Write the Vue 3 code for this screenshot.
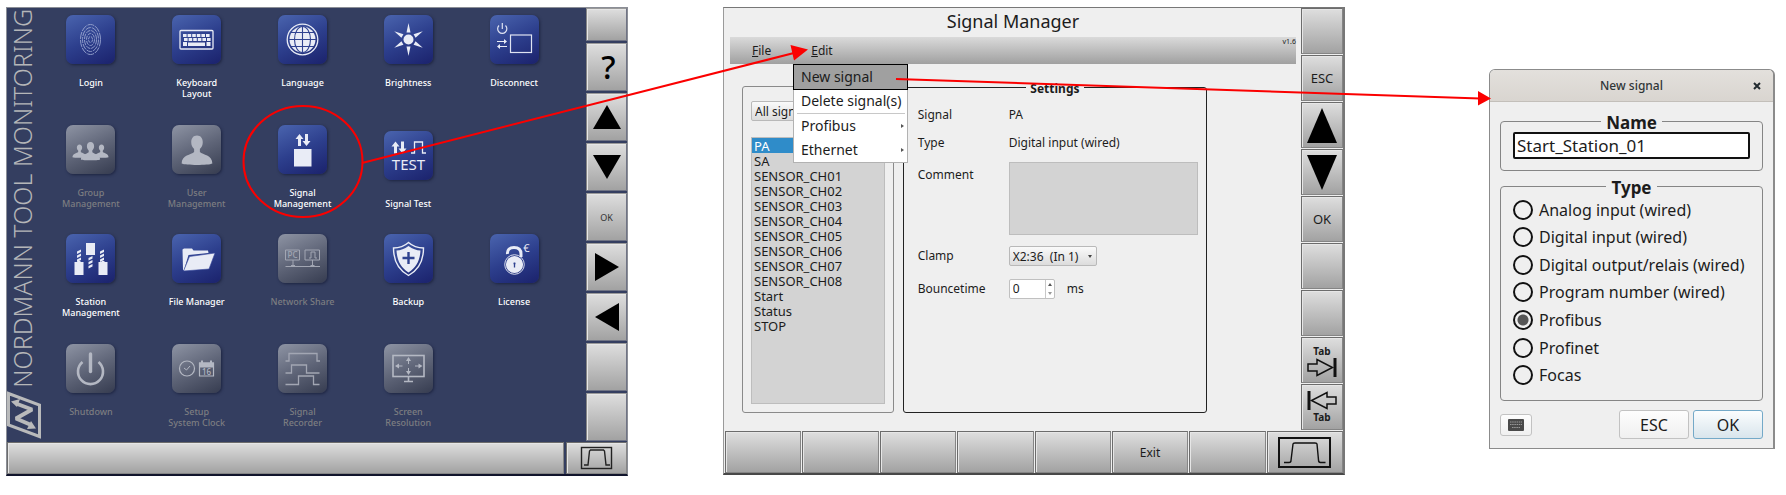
<script setup>
import { ref } from 'vue'

const pair = (x, y) =>
  `<path d="M${x} ${y + 12}h3v-7h2.500l-4-5-4 5h2.500zM${x + 7} ${y}h3v7h2.500l-4 5-4-5h2.500z" fill="#e9ecf6"/>`

const drill = (x, y) =>
  `<path d="M${x - 2} ${y + 2}l4-2v2.500l-4 2zM${x - 2} ${y + 6}l4-2v2.500l-4 2zM${x - 2} ${y + 10}l4-2v2.500l-4 2z" fill="#e9ecf6"/>`

const rays = [0, 60, 120, 180, 240, 300]
  .map((a) => `<path d="M22.500 17.500L24.500 8l2 9.500z" transform="rotate(${a} 24.500 24.500)" fill="#e9ecf6"/>`)
  .join('')

const keyDots = [
  [11, 19, 6], [12, 23, 6]
].map(([x, y, n]) => Array.from({ length: n }, (_, i) => `<rect x="${x + i * 4.6}" y="${y}" width="3.600" height="3" fill="#e9ecf6"/>`).join('')).join('')

const ridges = [2, 4, 6, 8, 10]
  .map((r, i) => `<ellipse cx="24.500" cy="24.500" rx="${r}" ry="${r * 1.5}" stroke-dasharray="${3 + i} 1" stroke="#8f9cca" stroke-width="1"/>`)
  .join('')

const bust = (x, y, s) =>
  `<path transform="translate(${x} ${y}) scale(${s})" d="M0-15c4 0 6 3 6 7 0 3-1 5-3 7v3c3 3 13 3 13 12-4 2-28 2-32 0 0-9 10-9 13-12v-3c-2-2-3-4-3-7 0-4 2-7 6-7z" fill="#b4b8c3"/>`

const icons = {
  login: ridges,
  keyboard: `<rect x="8" y="15.500" width="33" height="18.500" rx="1" stroke="#e9ecf6" stroke-width="1.300"/>${keyDots}<path d="M11 27h4v4h-4zM16 27.500h17v3.500H16zM34.500 27h4v4h-4z" fill="#e9ecf6"/>`,
  globe: `<g stroke="#e9ecf6" stroke-width="1.300"><circle cx="24.500" cy="24.500" r="15.300"/></g><circle cx="24.500" cy="24.500" r="13" fill="#e9ecf6"/><g stroke="#2f4290" stroke-width="1.100"><ellipse cx="24.500" cy="24.500" rx="8" ry="13"/><path d="M24.500 11v27M11 24.500h27M13 17.500h23M13 31.500h23"/></g>`,
  sun: `<circle cx="24.500" cy="24.500" r="5" fill="#e9ecf6"/>${rays}`,
  disconnect: `<g stroke="#dfe3f2" stroke-width="1.200"><path d="M9 10.500a4.600 4.600 0 1 0 6.500 0M12.300 8v6"/><rect x="20.500" y="20" width="21" height="17.500"/></g><path d="M7 26h7v-2l3 2.500-3 2.500v-2H7zM17 31h-7v-2l-3 2.500 3 2.500v-2h7z" fill="#e9ecf6"/>`,
  group: bust(13.5, 26, 0.44) + bust(35.5, 26, 0.44) + bust(24.5, 26, 0.6),
  user: bust(25, 25, 0.96),
  signal: `${pair(20, 9)}<rect x="16" y="24" width="17.500" height="17.500" fill="#e9ecf6"/>`,
  test: `${pair(10, 10.5)}<path d="M27 22h3.500V11h8v11H42" stroke="#e9ecf6" stroke-width="1.300"/><text x="24.500" y="39" font-size="15" font-weight="400" text-anchor="middle" fill="#e9ecf6">TEST</text>`,
  station: `<path d="M20 9h9v12h-9zM8.500 28h3v-1h3v1h3v13h-9zM32.500 28h3v-1h3v1h3v13h-9z" fill="#e9ecf6"/>${drill(13, 15.5)}${drill(24.5, 22)}${drill(36, 15.5)}`,
  folder: `<path d="M11 36l-.5-20.500 1.500-1h8l1.500 2H36l.500 2.500-20 2-4.500 15z" fill="#e9ecf6"/><path d="M17.500 22.500L43 19l-6 16-25.500 2z" fill="#e9ecf6" stroke="#35479a" stroke-width=".6"/>`,
  network: `<g stroke="#a2a6b3" stroke-width="1"><path d="M7.500 16h14v10h-14zM27 16h14.500v10H27zM15 26v6M34.500 26v6M7.500 32.500H42M31 24h2v-6h4v6h2"/></g><path d="M13 31h4v2h-4zM32.500 31h4v2h-4z" fill="#a2a6b3"/><text x="14.500" y="24" font-size="8" text-anchor="middle" fill="#a2a6b3">PC</text>`,
  shield: `<path d="M24.500 8.500c4.500 4 9.500 5.500 15 5.500 0 12-4 21.500-15 27.500-11-6-15-15.500-15-27.500 5.500 0 10.500-1.500 15-5.500z" stroke="#e9ecf6" stroke-width="1.400"/><path d="M24.500 12c4 3 8 4.300 12 4.500-.5 9.500-4 17-12 22-8-5-11.500-12.500-12-22 4-.2 8-1.500 12-4.500z" fill="#e9ecf6"/><path d="M24.500 18v12M18.500 24h12" stroke="#2f4290" stroke-width="2.400"/>`,
  lock: `<path d="M17.500 20c-.5-4 2-6.500 6.500-6.500s7 2.500 7 6.500v3" stroke="#e9ecf6" stroke-width="3"/><circle cx="24.500" cy="30.500" r="9.800" stroke="#e9ecf6" stroke-width=".9"/><circle cx="24.500" cy="30.500" r="8.600" fill="#e9ecf6"/><path d="M24.500 28.500v5M23.500 29.500h2" stroke="#2f4290" stroke-width="1.300"/><text x="36.500" y="18" font-size="11" font-weight="400" text-anchor="middle" fill="#e9ecf6">€</text>`,
  power: `<path d="M16.500 17a12.500 12.500 0 1 0 16 0" stroke="#b4b8c3" stroke-width="2.600" transform="translate(0 1)"/><path d="M24.500 10v17.500" stroke="#b4b8c3" stroke-width="3.400" stroke-linecap="round"/>`,
  clock: `<circle cx="15" cy="24.500" r="7.500" stroke="#b4b8c3" stroke-width="1.200"/><path d="M12 24l2.500 2 3.500-4" stroke="#b4b8c3"/><path d="M27.500 19h14v13h-14z" stroke="#b4b8c3" stroke-width="1.200"/><path d="M27 18.500h15v5H27zM29 16.500h2v3h-2zM38 16.500h2v3h-2z" fill="#b4b8c3"/><text x="34.500" y="31" font-size="8" text-anchor="middle" fill="#b4b8c3">16</text>`,
  recorder: `<path d="M7.500 17h3.500V9.500h28V17h3M7.500 29h6v-8h15v8h13M7.500 40.500h13V32h15v8.500h6" stroke="#a2a6b3" stroke-width="1.300"/>`,
  screen: `<rect x="9" y="11.500" width="31" height="21" stroke="#b4b8c3" stroke-width="1.600"/><path d="M24.500 33v4M20 37.500h9" stroke="#b4b8c3" stroke-width="1.600"/><path d="M24.500 13l2.500 4h-2v3h-1v-3h-2zM24.500 31l2.500-4h-2v-3h-1v3h-2zM11 22l4-2.500v2h3.500v1H15v2zM38.500 22l-4-2.500v2H31v1h3.500v2z" fill="#b4b8c3"/>`
}

const apps = [
  { name: ['Login'], icon: 'login' },
  { name: ['Keyboard', 'Layout'], icon: 'keyboard' },
  { name: ['Language'], icon: 'globe' },
  { name: ['Brightness'], icon: 'sun' },
  { name: ['Disconnect'], icon: 'disconnect' },
  { name: ['Group', 'Management'], icon: 'group', off: true },
  { name: ['User', 'Management'], icon: 'user', off: true },
  { name: ['Signal', 'Management'], icon: 'signal' },
  { name: ['Signal Test'], icon: 'test', low: true },
  null,
  { name: ['Station', 'Management'], icon: 'station' },
  { name: ['File Manager'], icon: 'folder' },
  { name: ['Network Share'], icon: 'network', off: true },
  { name: ['Backup'], icon: 'shield' },
  { name: ['License'], icon: 'lock' },
  { name: ['Shutdown'], icon: 'power', off: true },
  { name: ['Setup', 'System Clock'], icon: 'clock', off: true },
  { name: ['Signal', 'Recorder'], icon: 'recorder', off: true },
  { name: ['Screen', 'Resolution'], icon: 'screen', off: true }
]

const homeKeys = [
  { id: 'Blank 1' },
  { id: 'Help', text: '?' },
  { id: 'Up', shape: '15,2 29,26 1,26' },
  { id: 'Down', shape: '1,2 29,2 15,26' },
  { id: 'OK', text: 'OK' },
  { id: 'Right', shape: '3,0 27,14 3,28' },
  { id: 'Left', shape: '27,0 27,28 3,14' },
  { id: 'Blank 2' },
  { id: 'Blank 3' }
]

const managerKeys = [
  { id: 'Blank 1' },
  { id: 'Escape', text: 'ESC' },
  { id: 'Up', shape: '15,0 30,35 0,35' },
  { id: 'Down', shape: '0,0 30,0 15,35' },
  { id: 'Confirm', text: 'OK' },
  { id: 'Blank 2' },
  { id: 'Blank 3' },
  { id: 'Next field', tab: 'next' },
  { id: 'Previous field', tab: 'prev' }
]

const bottomKeys = ['', '', '', '', '', 'Exit', '']
const signals = ['PA', 'SA', 'SENSOR_CH01', 'SENSOR_CH02', 'SENSOR_CH03', 'SENSOR_CH04', 'SENSOR_CH05', 'SENSOR_CH06', 'SENSOR_CH07', 'SENSOR_CH08', 'Start', 'Status', 'STOP']
const types = ['Analog input (wired)', 'Digital input (wired)', 'Digital output/relais (wired)', 'Program number (wired)', 'Profibus', 'Profinet', 'Focas']

const selected = ref('PA')
const type = ref('Profibus')
const signalName = ref('Start_Station_01')
const bounce = ref('0')
const comment = ref('')
</script>

<template>
  <main class="page">
    <section class="home">
      <div class="home-body">
        <div class="rail">
          <span class="brand">NORDMANN TOOL MONITORING</span>
          <svg class="logo" viewBox="0 0 34 48" fill="none">
            <path d="M1.500 2.500L32.500 14v31.500L1.500 34z" stroke="#b9babb" stroke-width="3" />
            <path d="M9 12.500L25 18.500L9 27.500L23 33.500" stroke="#b9babb" stroke-width="4" stroke-linejoin="bevel" />
            <path d="M4 10.500L13 8l-3 8zM29 37.500l-9 .5 4-8z" fill="#b9babb" />
          </svg>
        </div>
        <div class="apps">
          <div v-for="(app, i) in apps" :key="i" class="cell">
            <button v-if="app" class="app" :class="{ off: app.off, low: app.low }">
              <span class="tile"><svg viewBox="0 0 49 49" fill="none" v-html="icons[app.icon]"></svg></span>
              <span class="app-name"><span v-for="line in app.name" :key="line">{{ line }}</span></span>
            </button>
          </div>
        </div>
        <div class="home-keys">
          <button v-for="k in homeKeys" :key="k.id" class="key" :class="{ help: k.text === '?' }" :aria-label="k.id">
            <svg v-if="k.shape" width="30" height="28" viewBox="0 0 30 28"><polygon :points="k.shape" /></svg>
            <template v-else>{{ k.text }}</template>
          </button>
        </div>
      </div>
      <div class="home-bar">
        <button class="key" aria-label="Status bar"></button>
        <button class="key" aria-label="Curve">
          <svg width="34" height="24" viewBox="0 0 34 24" fill="none" stroke="#222">
            <rect x="1.500" y="1.500" width="30" height="21" stroke-width="1.400" />
            <path d="M4 19h4l1.500-14 1-1h13l1 1L26 19h4" stroke-width="1.400" />
          </svg>
        </button>
      </div>
    </section>

    <section class="manager">
      <div class="manager-body">
        <div class="work">
          <h1>Signal Manager</h1>
          <nav class="menubar">
            <button><u>F</u>ile</button>
            <button><u>E</u>dit</button>
            <small>v1.6</small>
            <div class="popup">
              <button class="active">New signal</button>
              <button>Delete signal(s)</button>
              <hr />
              <button>Profibus<i></i></button>
              <button>Ethernet<i></i></button>
            </div>
          </nav>
          <div class="panes">
            <div class="list-pane">
              <div class="combo wide">
                <select aria-label="Signal filter"><option>All signals</option></select>
              </div>
              <ul>
                <li v-for="s in signals" :key="s">
                  <button :class="{ chosen: s === selected }" @click="selected = s">{{ s }}</button>
                </li>
              </ul>
            </div>
            <fieldset class="settings">
              <legend>Settings</legend>
              <div class="form">
                <span>Signal</span><span>PA</span>
                <span>Type</span><span>Digital input (wired)</span>
                <label for="comment" class="top">Comment</label>
                <textarea id="comment" v-model="comment"></textarea>
                <label for="clamp">Clamp</label>
                <div class="combo">
                  <select id="clamp"><option>X2:36&nbsp; (In 1)</option></select>
                </div>
                <label for="bounce">Bouncetime</label>
                <div class="unit">
                  <div class="spin">
                    <input id="bounce" v-model="bounce" type="text" inputmode="numeric" />
                    <div class="steps">
                      <button aria-label="Increase"></button>
                      <button aria-label="Decrease"></button>
                    </div>
                  </div>
                  <span>ms</span>
                </div>
              </div>
            </fieldset>
          </div>
        </div>
        <div class="manager-keys">
          <button v-for="k in managerKeys" :key="k.id" class="key" :aria-label="k.id">
            <svg v-if="k.shape" width="30" height="35" viewBox="0 0 30 35"><polygon :points="k.shape" /></svg>
            <template v-else-if="k.tab">
              <b v-if="k.tab === 'next'">Tab</b>
              <svg width="30" height="19" viewBox="0 0 30 19" fill="none" stroke="#111" stroke-width="1.500">
                <g :transform="k.tab === 'prev' ? 'matrix(-1 0 0 1 30 0)' : undefined">
                  <path d="M1 6h9V1.500l15.500 8L10 17.500V13H1z" />
                  <path d="M28 0v19" stroke-width="3" />
                </g>
              </svg>
              <b v-if="k.tab === 'prev'">Tab</b>
            </template>
            <template v-else>{{ k.text }}</template>
          </button>
        </div>
      </div>
      <div class="manager-bar">
        <button v-for="(k, i) in bottomKeys" :key="i" class="key" :aria-label="k || 'Blank'">{{ k }}</button>
        <button class="key" aria-label="Curve">
          <svg width="53" height="31" viewBox="0 0 53 31" fill="none" stroke="#111">
            <rect x="1" y="1" width="51" height="29" stroke-width="2" />
            <path d="M6 25.500h5q2 0 2-2L15 7q0-1 2-1h20q2 0 2 1l1.500 16q0 2.500 2 2.500h5" stroke-width="1.400" />
          </svg>
        </button>
      </div>
    </section>

    <section class="dialog">
      <header>
        <h2>New signal</h2>
        <button aria-label="Close">
          <svg width="8" height="8" viewBox="0 0 8 8" stroke="#222b30" stroke-width="2"><path d="M1 1l6 6M7 1L1 7" /></svg>
        </button>
      </header>
      <div class="dialog-body">
        <fieldset class="name-box">
          <legend>Name</legend>
          <input v-model="signalName" type="text" aria-label="Name" />
        </fieldset>
        <fieldset class="type-box">
          <legend>Type</legend>
          <div class="choices">
            <label v-for="t in types" :key="t"><input v-model="type" type="radio" name="type" :value="t" />{{ t }}</label>
          </div>
        </fieldset>
        <footer>
          <button class="kbd" aria-label="On-screen keyboard">
            <svg width="16" height="12" viewBox="0 0 16 12">
              <rect width="16" height="12" rx="1" fill="#4a4a4a" />
              <path d="M2 3h12M2 5.500h12M4 8.500h8" stroke="#9a9a9a" stroke-dasharray="1.500 .7" />
            </svg>
          </button>
          <button>ESC</button>
          <button class="default">OK</button>
        </footer>
      </div>
    </section>

    <svg class="callouts" viewBox="0 0 1786 495" preserveAspectRatio="none" fill="none" stroke="#fb0000" stroke-width="2">
      <ellipse cx="303" cy="161.500" rx="59.500" ry="55.500" />
      <path d="M362 163L794 53M896 79L1480 98.500" />
      <path d="M808 49.500L790.500 45l3.500 15.500zM1491 98.500L1478 91v14.500z" fill="#fb0000" stroke="none" />
    </svg>
  </main>
</template>

<style>
body { margin: 0; background: #fff; }
</style>

<style scoped>
.page {
  position: relative;
  display: grid;
  grid-template-columns: 622fr 95fr 622fr 144fr 286fr;
  align-items: start;
  padding: 7px 11px 20px 6px;
  font-family: "Noto Sans", "Open Sans", sans-serif;
  font-size: 12px;
  color: #1c1c1c;
}
.page *, .page { box-sizing: border-box; }
button, input, select, textarea { font: inherit; color: inherit; margin: 0; }
button { padding: 0; border: 0; background: none; }
h1, h2, ul, fieldset { margin: 0; padding: 0; font-weight: 400; }
.home { grid-column: 1; }
.manager { grid-column: 3; }
.dialog { grid-column: 5; }
.callouts { position: absolute; z-index: 2; left: 0; top: 0; width: 100%; height: 495px; pointer-events: none; }

.key {
  display: flex;
  flex-direction: column;
  align-items: center;
  justify-content: center;
  min-width: 0;
  border: 1px solid #858585;
  border-top-color: #6c6c6c;
  border-left-color: #6c6c6c;
  background: linear-gradient(#dedede, #a2a2a2);
  box-shadow: inset 1px 1px 0 #e6e6e6;
}

.home { background: #343e60; border: 1px solid #8b8e96; border-bottom: 2px solid #11142c; overflow: hidden; }
.home-body { display: grid; grid-template-columns: 31px 1fr 41px; }
.rail { contain: size; display: flex; flex-direction: column; align-items: center; justify-content: flex-end; gap: 3px; padding-bottom: 2px; }
.brand { flex: none; writing-mode: vertical-rl; transform: rotate(180deg); font-size: 25px; line-height: 31px; font-weight: 300; white-space: nowrap; color: #b5b6b8; }
.logo { flex: none; align-self: flex-start; width: 34px; height: 48px; }
.apps { display: grid; grid-template-columns: repeat(5, 1fr); grid-template-rows: 110px 109px 110px 97px; padding: 7px 19px 0 0; }
.cell { display: flex; justify-content: center; align-items: flex-start; }
.app { display: flex; flex-direction: column; align-items: center; gap: 13px; color: #fff; font-size: 9px; line-height: 11px; font-weight: 500; }
.app-name { display: flex; flex-direction: column; white-space: nowrap; }
.tile { width: 49px; height: 49px; border-radius: 7px; background: linear-gradient(155deg, #4a64ae, #2d3f8d 50%, #1b226c); box-shadow: 1px 1px 3px #1d2440; }
.tile svg { display: block; width: 100%; height: 100%; }
.off { color: #7c7d80; }
.off .tile { background: linear-gradient(155deg, #8e94a4, #5f6578 50%, #363c50); }
.low { padding-top: 6px; gap: 18px; }
.home-keys { display: grid; grid-template-rows: 33px repeat(8, 48px); gap: 2px; }
.home-keys .key { font-size: 9px; color: #333; border-color: #9a9a9a #6f7384 #6f7384 #858585; }
.home-keys .help { font-size: 32px; line-height: 32px; font-weight: 500; color: #000; padding-left: 4px; }
.home-bar { display: grid; grid-template-columns: 1fr 61px; gap: 2px; padding-top: 1px; height: 33px; }

.manager { background: #efefef; border: 1px solid #9a9a9a; border-top-color: #777; border-right: 2px solid #777; border-bottom: 2px solid #484848; }
.manager-body { display: grid; grid-template-columns: 1fr 42px; }
.work { display: flex; flex-direction: column; padding: 0 5px 0 6px; }
h1 { height: 29px; font-size: 18px; line-height: 27px; text-align: center; }
.menubar { position: relative; display: flex; align-items: center; gap: 40px; height: 27px; padding-left: 22px; background: linear-gradient(#dadada, #a0a0a0); }
.menubar small { margin-left: auto; align-self: flex-start; font-size: 7px; line-height: 9px; }
.popup { position: absolute; z-index: 1; left: 63px; top: 27px; width: 115px; display: flex; flex-direction: column; background: #fff; border: 1px solid #b2b2b2; font-size: 14px; }
.popup button { display: flex; align-items: center; justify-content: space-between; height: 24px; padding: 0 3px 1px 7px; white-space: nowrap; }
.popup .active { background: #a0a0a0; outline: 1px solid #000; }
.popup hr { width: 108px; margin: 0 auto; border: 0; border-top: 1px solid #c8c8c8; }
.popup i { border: 2px solid transparent; border-left: 3px solid #555; border-right: 0; }
.panes { flex: 1; display: grid; grid-template-columns: 152fr 305fr 80fr; column-gap: 9px; padding: 22px 0 18px 12px; }
.list-pane { display: flex; flex-direction: column; gap: 16px; padding: 14px 8px 8px; border: 1px solid #8a8a8a; border-radius: 3px; }
.combo { position: relative; width: 88px; }
.combo.wide { width: auto; }
.combo select { display: block; width: 100%; height: 20px; padding: 0 3px; appearance: none; border: 1px solid #b9b9b9; border-radius: 2px; background: linear-gradient(#fafafa, #dcdcdc); }
.combo::after { content: ""; position: absolute; right: 5px; top: 9px; border: 2px solid transparent; border-top: 3px solid #444; border-bottom: 0; }
ul { flex: 1; list-style: none; background: #d3d3d3; border: 1px solid #bdbdbd; }
li { height: 15px; }
li button { display: block; width: 100%; height: 15px; padding-left: 2px; text-align: left; font-size: 13px; line-height: 16px; }
li .chosen { background: #2f8cc9; color: #fff; }
.settings { min-width: 0; border: 1px solid #222; border-radius: 3px; margin-top: -3px; }
legend { margin: 0 auto; font-weight: 700; }
.settings legend { height: 8px; line-height: 12px; padding: 0 4px; }
.form { display: grid; grid-template-columns: 91px 1fr; grid-template-rows: 28px 28px 89px 20px 13px 20px; align-items: center; padding: 10px 8px 0 14px; }
.form > * { line-height: 20px; }
.form .top { align-self: start; padding-top: 8px; }
.form textarea { align-self: start; height: 73px; margin-top: 5px; width: 100%; resize: none; border: 1px solid #bdbdbd; background: #d3d3d3; }
.form label[for="bounce"], .unit { grid-row: 6; }
.unit { display: flex; align-items: center; gap: 12px; }
.spin { display: flex; width: 46px; height: 20px; border: 1px solid #c0c0c0; border-radius: 2px; background: #fff; }
.spin input { flex: 1; min-width: 0; padding: 0 3px; border: 0; background: none; }
.steps { display: flex; flex-direction: column; justify-content: space-around; align-items: center; width: 9px; border-left: 1px solid #c8c8c8; }
.steps button { border: 2px solid transparent; border-bottom: 3px solid #555; border-top: 0; }
.steps button:last-child { border: 2px solid transparent; border-top: 3px solid #999; border-bottom: 0; }
.manager-keys { display: grid; grid-template-rows: repeat(9, 46px); gap: 1px; padding-bottom: 1px; }
.manager-keys .key { font-size: 13px; }
.manager-keys b { font-size: 10px; line-height: 14px; }
.manager-bar { display: grid; grid-template-columns: repeat(8, 1fr); gap: 1px; height: 42px; padding-left: 1px; }

.dialog { margin-top: 62px; border: 1px solid #8b8b8b; border-right-width: 2px; border-radius: 6px 6px 0 0; background: #efefef; overflow: hidden; }
.dialog header { display: grid; grid-template-columns: 1fr auto; align-items: center; height: 32px; padding: 0 12px 0 20px; background: linear-gradient(#e3e0dc, #d9d5d0); border-bottom: 1px solid #c3bfba; }
h2 { font-size: 12px; font-weight: 500; text-align: center; color: #303638; }
.dialog header svg { display: block; }
.dialog-body { padding: 9px 10px; font-size: 16px; }
.dialog fieldset { min-width: 0; border: 1px solid #858585; border-radius: 4px; padding: 0 12px; }
.dialog legend { padding: 0 5px; height: 20px; line-height: 24px; font-size: 17px; }
.name-box input { display: block; width: 100%; height: 27px; margin-top: 1px; padding: 0 2px; border: 2px solid #111; border-radius: 2px; background: #fff; font-size: 17px; }
.dialog .name-box { padding-bottom: 11px; }
.dialog .type-box { display: block; margin-top: 5px; padding-bottom: 11px; }
.choices { display: grid; grid-template-rows: repeat(7, 1fr); height: 193px; }
.type-box label { display: flex; align-items: center; gap: 6px; white-space: nowrap; }
.type-box input { appearance: none; flex: none; width: 20px; height: 20px; border: 2px solid #111; border-radius: 50%; }
.type-box input:checked { background: radial-gradient(#555 5px, transparent 6px); }
footer { display: flex; align-items: center; gap: 4px; margin-top: 9px; }
footer button { flex: 0 0 70px; height: 29px; border: 1px solid #c2c2c2; border-radius: 3px; background: linear-gradient(#fdfdfd, #f0f0f0); }
footer .default { border-color: #74a9c8; background: linear-gradient(#fbfdfe, #d9e5ec); }
footer .kbd { flex-basis: 32px; height: 22px; margin-right: auto; display: flex; align-items: center; justify-content: center; }
</style>
